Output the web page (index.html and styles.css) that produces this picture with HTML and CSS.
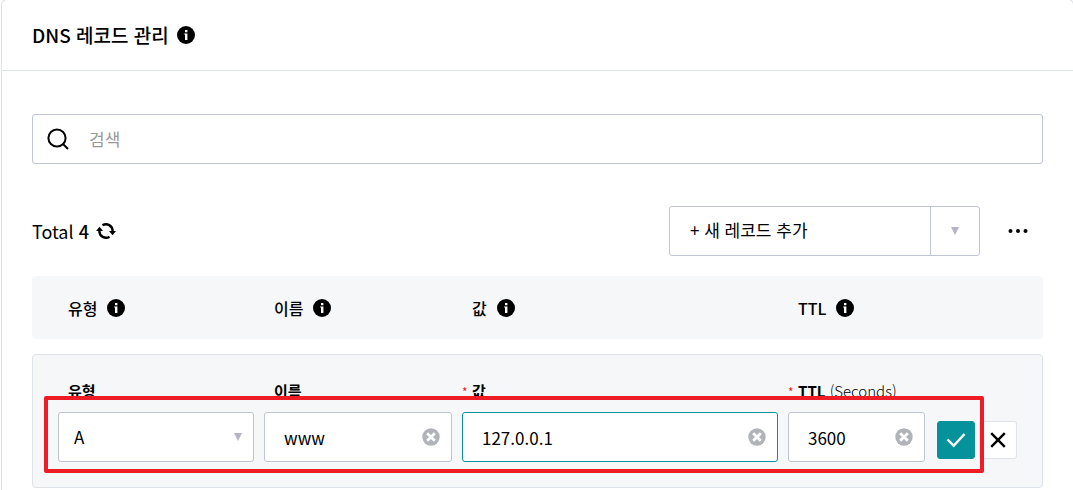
FILE: index.html
```html
<!DOCTYPE html>
<html lang="ko">
<head>
    <meta charset="UTF-8">
    <meta name="viewport" content="width=device-width, initial-scale=1.0">
    <title>DNS 레코드 관리</title>
    <link rel="stylesheet" href="styles.css">
</head>
<body>
    <!-- Shared icon shapes -->
    <svg class="sprite" aria-hidden="true">
        <symbol id="icon-info" viewBox="0 0 18 18">
            <circle cx="9" cy="9" r="9" fill="#000"/>
            <path d="M8 4h2.4v2.2H8zM7.2 7.4h3.2V14H8V8.6h-.8z" fill="#fff"/>
        </symbol>
        <symbol id="icon-clear" viewBox="0 0 18 18">
            <circle cx="9" cy="9" r="8.7" fill="#b0b3b8"/>
            <path d="M5.2 5.2l7.6 7.6M12.8 5.2l-7.6 7.6" stroke="#fff" stroke-width="2.8"/>
        </symbol>
        <symbol id="icon-caret" viewBox="0 0 8 8">
            <path d="M0 0h8L4 8z" fill="#b4b3c8"/>
        </symbol>
    </svg>

    <main class="panel">
        <header class="panel-header">
            <h1>DNS 레코드 관리</h1>
            <button type="button" class="icon-btn" aria-label="DNS 레코드 관리"><svg class="info"><use href="#icon-info"/></svg></button>
        </header>

        <div class="panel-body">
            <div class="search">
                <label for="search" aria-label="검색">
                    <svg class="search-icon" viewBox="0 0 22 22" fill="none" stroke="#000" stroke-width="2">
                        <circle cx="10" cy="10" r="8.6"/>
                        <path d="M16 16l5 5"/>
                    </svg>
                </label>
                <input type="text" id="search" placeholder="검색">
            </div>

            <div class="toolbar">
                <p class="total">Total <strong>4</strong></p>
                <button type="button" class="icon-btn refresh" aria-label="Refresh">
                    <svg viewBox="0 0 20 16" fill="none" stroke="#000" stroke-width="2.4">
                        <path d="M6.5 2.3A6.6 6.6 0 0 1 16.6 8"/>
                        <path d="M13.5 13.7A6.6 6.6 0 0 1 3.4 8"/>
                        <path d="M13 8h7l-3.5 4.2zM7 8H0l3.5-4.2z" fill="#000" stroke="none"/>
                    </svg>
                </button>
                <div class="split-btn">
                    <button type="button" class="add">+ 새 레코드 추가</button>
                    <button type="button" class="open" aria-label="Open"><svg class="caret"><use href="#icon-caret"/></svg></button>
                </div>
                <button type="button" class="icon-btn more" aria-label="More">
                    <svg viewBox="0 0 20 4">
                        <circle cx="2.5" cy="2" r="2"/>
                        <circle cx="10" cy="2" r="2"/>
                        <circle cx="17.5" cy="2" r="2"/>
                    </svg>
                </button>
            </div>

            <table class="records">
                <thead>
                    <tr>
                        <th>유형 <svg class="info"><use href="#icon-info"/></svg></th>
                        <th>이름 <svg class="info"><use href="#icon-info"/></svg></th>
                        <th>값 <svg class="info"><use href="#icon-info"/></svg></th>
                        <th>TTL <svg class="info"><use href="#icon-info"/></svg></th>
                    </tr>
                </thead>
                <tbody>
                    <tr class="editing">
                        <td>
                            <label for="type">유형</label>
                            <div class="field">
                                <select id="type">
                                    <option>A</option>
                                </select>
                                <svg class="caret"><use href="#icon-caret"/></svg>
                            </div>
                        </td>
                        <td>
                            <label for="name">이름</label>
                            <div class="field">
                                <input type="text" id="name" value="www">
                                <button type="button" class="icon-btn" aria-label="Clear"><svg class="clear"><use href="#icon-clear"/></svg></button>
                            </div>
                        </td>
                        <td>
                            <label for="value"><span class="required">*</span>값</label>
                            <div class="field active">
                                <input type="text" id="value" value="127.0.0.1">
                                <button type="button" class="icon-btn" aria-label="Clear"><svg class="clear"><use href="#icon-clear"/></svg></button>
                            </div>
                        </td>
                        <td>
                            <label for="ttl"><span class="required">*</span>TTL <span class="unit">(Seconds)</span></label>
                            <div class="field">
                                <input type="text" id="ttl" value="3600">
                                <button type="button" class="icon-btn" aria-label="Clear"><svg class="clear"><use href="#icon-clear"/></svg></button>
                            </div>
                        </td>
                        <td class="actions">
                            <button type="button" class="action save" aria-label="Save">
                                <svg viewBox="0 0 20 20" fill="none" stroke="#fff" stroke-width="2.4"><path d="M1.5 9.5l6.2 6.2L18.5 4"/></svg>
                            </button>
                            <button type="button" class="action cancel" aria-label="Cancel">
                                <svg viewBox="0 0 20 20" fill="none" stroke="#000" stroke-width="2.4"><path d="M3.2 3.2l13.6 13.6M16.8 3.2L3.2 16.8"/></svg>
                            </button>
                        </td>
                    </tr>
                </tbody>
            </table>
        </div>
    </main>
</body>
</html>
```

FILE: styles.css
```css
* {
    margin: 0;
    padding: 0;
    box-sizing: border-box;
}

body {
    font-family: 'Noto Sans CJK KR', sans-serif;
    font-size: 16px;
    line-height: 24px;
    color: #000;
    background: #fff;
    overflow-x: hidden;
}

button, input, select {
    font: inherit;
    color: inherit;
    background: none;
    border: none;
    outline: none;
}

button {
    cursor: pointer;
}

svg {
    display: block;
    flex: none;
}

.sprite {
    position: absolute;
    width: 0;
    height: 0;
}

.info, .clear {
    width: 18px;
    height: 18px;
}

.caret {
    width: 8px;
    height: 8px;
}

.icon-btn {
    display: flex;
    align-items: center;
    justify-content: center;
}

.panel {
    margin: -1px -1px 0 1px;
    border: 1px solid #dde3e9;
    border-bottom: none;
    border-radius: 6px 6px 0 0;
}

.panel-header {
    display: flex;
    align-items: center;
    gap: 8px;
    height: 71px;
    padding: 0 30px;
    border-bottom: 1px solid #dde3e9;
}

h1 {
    font-size: 19px;
    font-weight: 500;
}

.panel-body {
    padding: 43px 30px 2px;
}

.search {
    display: flex;
    align-items: center;
    gap: 20px;
    height: 50px;
    padding: 0 14px;
    border: 1px solid #bec7d1;
    border-radius: 3px;
}

.search-icon {
    width: 22px;
    height: 22px;
}

.search input {
    flex: 1;
    min-width: 0;
    font-size: 17px;
}

.search input::placeholder {
    color: #999;
    opacity: 1;
}

.toolbar {
    display: flex;
    align-items: center;
    height: 50px;
    margin: 42px 0 20px;
}

.total {
    font-size: 18px;
}

.total strong {
    font-weight: 500;
}

.refresh {
    margin-left: 7px;
}

.refresh svg {
    width: 20px;
    height: 16px;
}

.split-btn {
    display: flex;
    width: 311px;
    height: 50px;
    margin-left: auto;
    border: 1px solid #bec7d1;
    border-radius: 3px;
}

.add {
    flex: 1;
    padding: 0 20px 2px;
    font-size: 17px;
    text-align: left;
}

.open {
    display: flex;
    align-items: center;
    justify-content: center;
    width: 49px;
    border-left: 1px solid #bec7d1;
}

.more {
    width: 50px;
    height: 50px;
    margin-left: 13px;
}

.more svg {
    width: 20px;
    height: 4px;
}

/* The header and the edited row share one column grid */
.records, .records thead, .records tbody {
    display: block;
}

.records tr {
    display: grid;
    grid-template-columns: 196fr 188fr 316fr 137fr 82px;
    gap: 10px;
    border: 1px solid #f5f7f9;
    border-radius: 4px;
    background: #f5f7f9;
    padding: 0 25px;
}

.records thead tr {
    height: 63px;
    align-items: center;
}

.records th {
    display: flex;
    align-items: center;
    gap: 10px;
    padding-left: 10px;
    font-weight: 500;
}

.records .editing {
    position: relative;
    margin-top: 15px;
    padding: 24px 25px 25px;
    border-color: #dde3e9;
}

.editing::after {
    content: "";
    position: absolute;
    inset: 41px 58px 14px 11px;
    border: 4px solid #ee1c25;
    border-radius: 2px;
    pointer-events: none;
}

.records td {
    min-width: 0;
}

.records td label {
    display: block;
    height: 24px;
    padding-left: 10px;
    margin-bottom: 9px;
    font-size: 15px;
    font-weight: 700;
    white-space: nowrap;
}

.required {
    display: inline-block;
    width: 10px;
    margin-left: -10px;
    font-size: 12px;
    font-weight: 400;
    color: #ee1c25;
}

.unit {
    font-weight: 300;
}

.field {
    display: flex;
    align-items: center;
    height: 50px;
    padding-right: 11px;
    border: 1px solid #bec7d1;
    border-radius: 3px;
    background: #fff;
}

.field.active {
    border-color: #06929b;
}

.field input, .field select {
    flex: 1;
    min-width: 0;
    height: 48px;
    padding-left: 19px;
    font-size: 17px;
}

.field select {
    padding-left: 15px;
    appearance: none;
}

.actions {
    display: flex;
    align-items: flex-end;
    justify-content: flex-end;
    gap: 4px;
    padding-bottom: 3px;
}

.action {
    display: flex;
    align-items: center;
    justify-content: center;
    width: 38px;
    height: 38px;
    border: 1px solid #dde3e9;
    border-radius: 3px;
    background: #fff;
}

.action svg {
    width: 20px;
    height: 20px;
}

.save {
    border-color: #06929b;
    background: #06929b;
}
```
